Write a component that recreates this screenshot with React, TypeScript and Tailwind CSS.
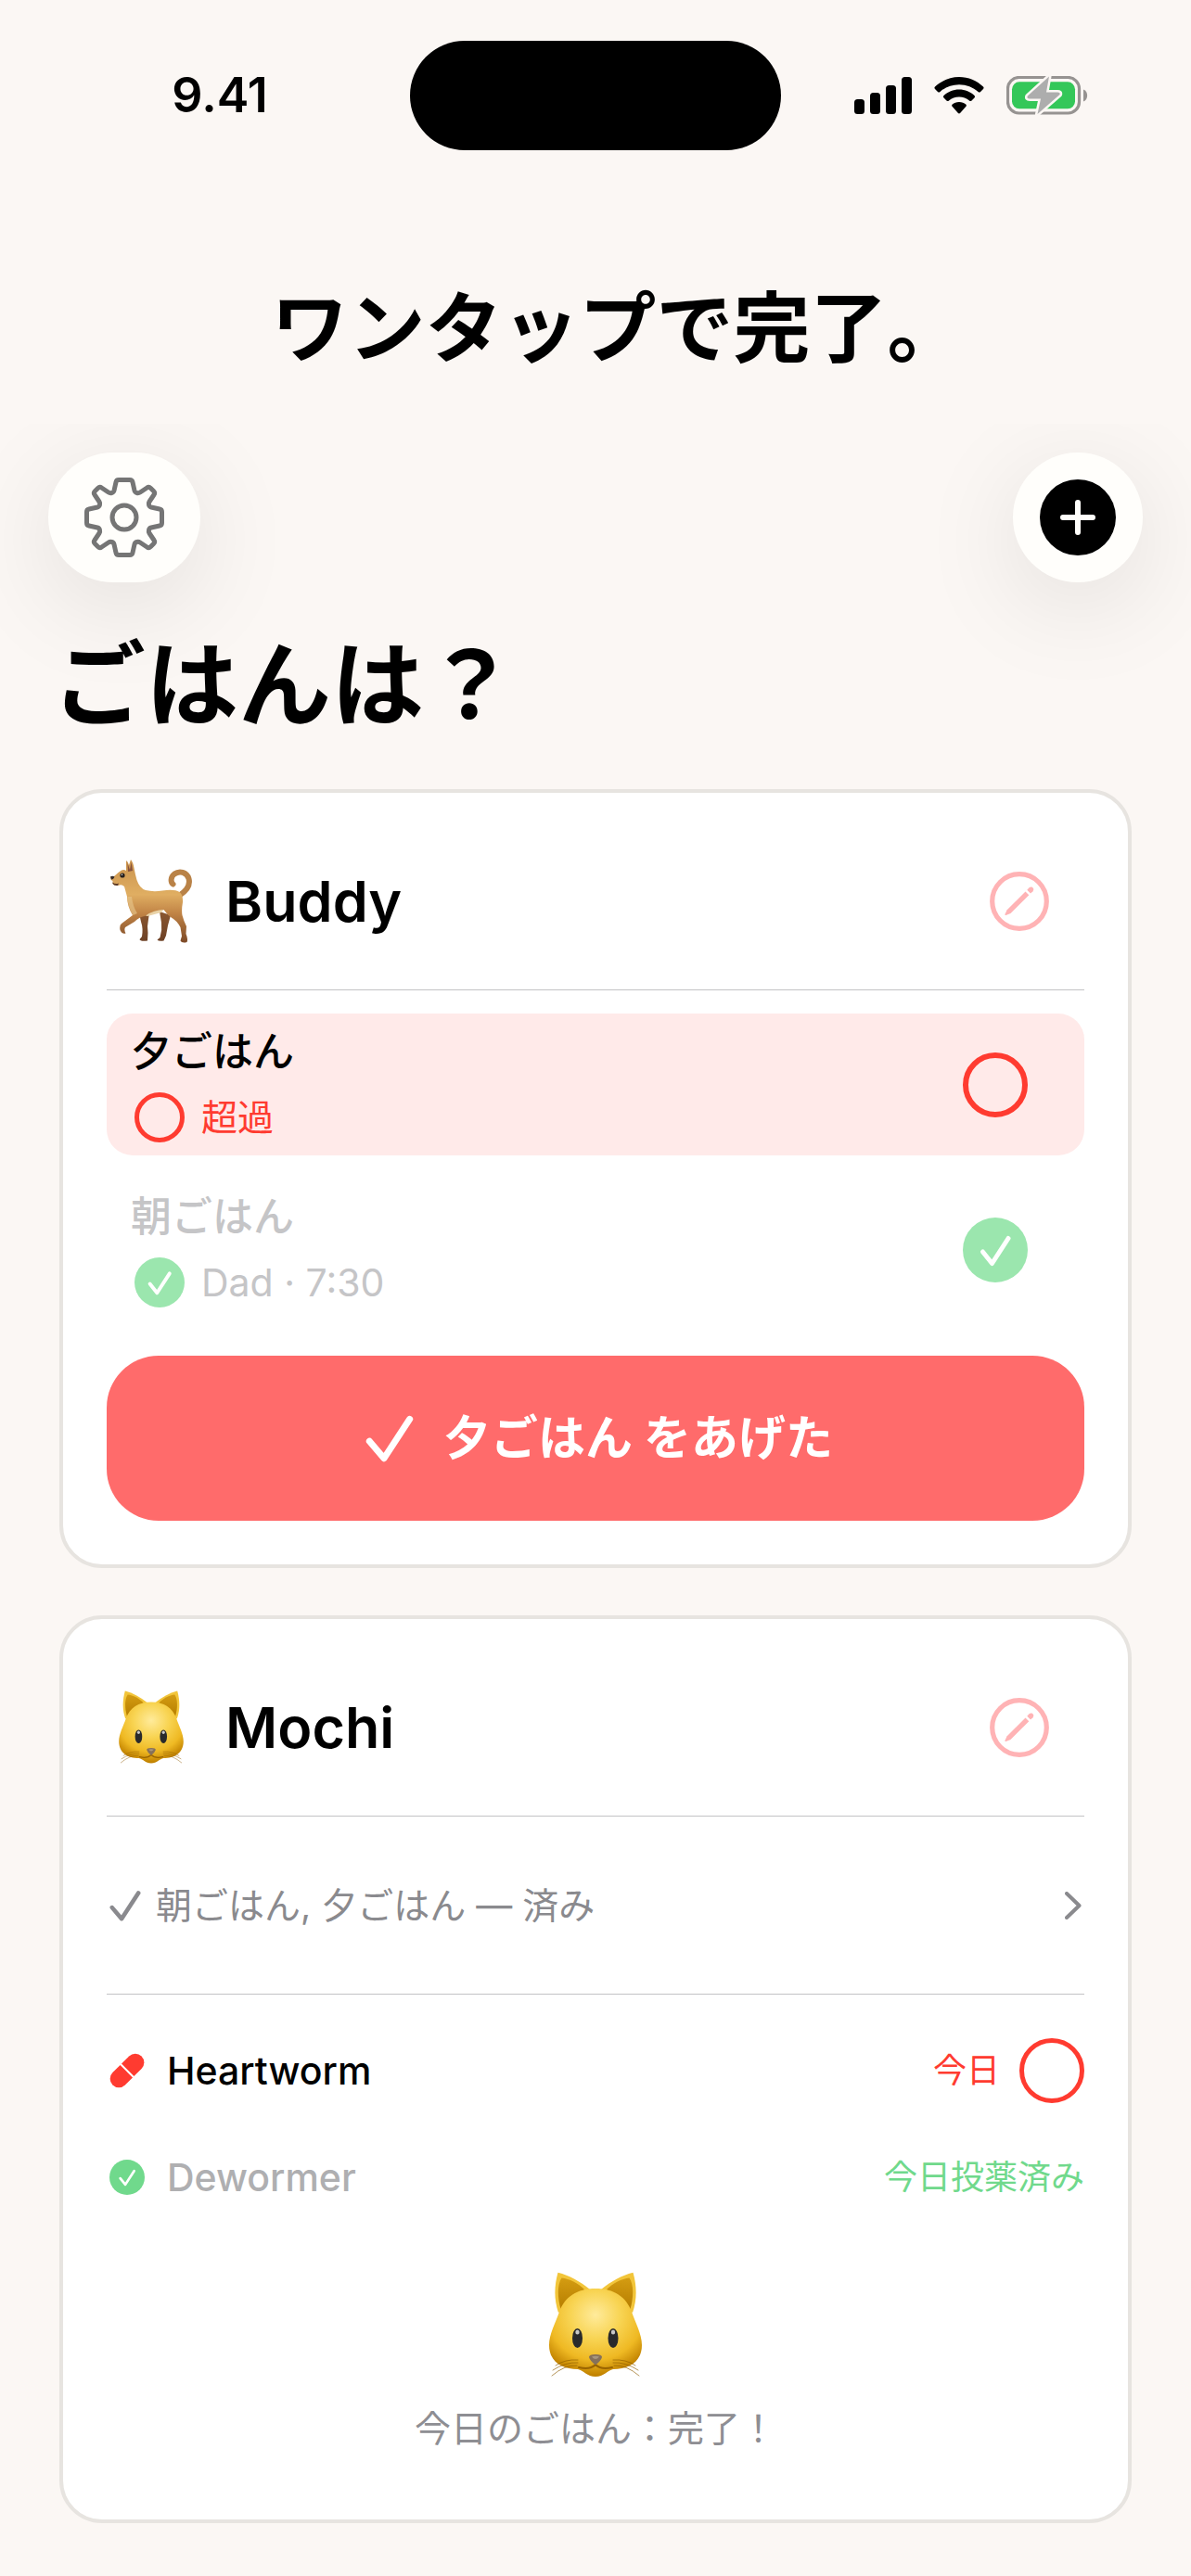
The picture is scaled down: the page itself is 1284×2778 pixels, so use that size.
import React from 'react';

interface IconProps {
  className?: string;
}

interface TickCircleProps {
  label: string;
  done?: boolean;
  thin?: boolean;
}

interface PetCardProps {
  name: string;
  avatar: React.ReactNode;
  children: React.ReactNode;
}

const CheckIcon: React.FC<IconProps> = ({ className }) => (
  <svg className={className} viewBox="0 0 48 48" fill="none" stroke="currentColor" aria-hidden="true">
    <path strokeLinecap="round" strokeLinejoin="round" strokeWidth={6.5} d="M4 27L18.500 44L44 5" />
  </svg>
);

const CheckCircle: React.FC<IconProps> = ({ className }) => (
  <svg className={className} viewBox="0 0 70 70" aria-hidden="true">
    <circle cx="35" cy="35" r="35" fill="currentColor" />
    <path d="M21.500 37L31.500 49.500L49 22.500" fill="none" stroke="#fff" strokeWidth="5" strokeLinecap="round" strokeLinejoin="round" />
  </svg>
);

const SignalIcon = () => (
  <svg className="h-10 w-[62px]" viewBox="0 0 62 40" aria-hidden="true">
    <rect x="0" y="24" width="11" height="16" rx="3.500" />
    <rect x="17" y="17" width="11" height="23" rx="3.500" />
    <rect x="34" y="9" width="11" height="31" rx="3.500" />
    <rect x="51" y="0" width="11" height="40" rx="3.500" />
  </svg>
);

const WifiIcon = () => (
  <svg className="h-10 w-[54px]" viewBox="0 0 54 40" aria-hidden="true">
    <path d="M27 0C37 0 46 4 53 10.500Q54.200 11.800 53 13L50 16Q48.800 17 47.500 16C42 11 35 8.200 27 8.200S12 11 6.500 16Q5.200 17 4 16L1 13Q-.2 11.800 1 10.500C8 4 17 0 27 0Z" />
    <path d="M27 13.500C33.500 13.500 39 16 43.500 20Q44.800 21.300 43.500 22.600L40.500 25.500Q39.300 26.600 38 25.500C35 23 31.200 21.500 27 21.500S19 23 16 25.500Q14.700 26.600 13.500 25.500L10.500 22.600Q9.200 21.300 10.500 20C15 16 20.500 13.500 27 13.500Z" />
    <path d="M27 27C30 27 32.500 28 34.200 29.400Q35.500 30.600 34.200 31.900L28.300 38.800Q27 40.200 25.700 38.800L19.800 31.900Q18.500 30.600 19.800 29.400C21.500 28 24 27 27 27Z" />
  </svg>
);

const BatteryIcon = () => (
  <svg className="h-[42px] w-[88px]" viewBox="0 0 88 42" aria-hidden="true">
    <rect x="1.500" y="1.500" width="77" height="38.500" rx="12" fill="none" stroke="#969391" strokeWidth="3.200" />
    <rect x="6" y="6.300" width="68" height="29" rx="8" fill="#34c759" />
    <path d="M83 14.500C88.500 16.500 88.500 25.500 83 27.500Z" fill="#969391" />
    <path d="M46 .5L22.800 21.500Q21.500 24.500 25 24.500H37L33.500 41L57.500 20Q58.500 17.500 55 17.500H43Z" fill="#adadad" stroke="#fbf7f4" strokeWidth="5" paintOrder="stroke" strokeLinejoin="round" />
  </svg>
);

const GearIcon: React.FC<IconProps> = ({ className }) => (
  <svg className={className} viewBox="-43 -43 86 86" fill="none" stroke="currentColor" strokeWidth="5" strokeLinejoin="round" aria-hidden="true">
    <path d="M-6 -40.500H6Q8.500 -40.500 9 -38L11 -29Q11.500 -27 13.500 -26.500Q15.500 -26 17 -27L24.500 -32Q26.500 -33.500 28.500 -31.500L31.500 -28.500Q33.500 -26.500 32 -24.500L27 -17Q26 -15.500 26.500 -13.500Q27 -11.500 29 -11L38 -9Q40.500 -8.500 40.500 -6V6Q40.500 8.500 38 9L29 11Q27 11.500 26.500 13.500Q26 15.500 27 17L32 24.500Q33.500 26.500 31.500 28.500L28.500 31.500Q26.500 33.500 24.500 32L17 27Q15.500 26 13.500 26.500Q11.500 27 11 29L9 38Q8.500 40.500 6 40.500H-6Q-8.500 40.500 -9 38L-11 29Q-11.500 27 -13.500 26.500Q-15.500 26 -17 27L-24.500 32Q-26.500 33.500 -28.500 31.500L-31.500 28.500Q-33.500 26.500 -32 24.500L-27 17Q-26 15.500 -26.500 13.500Q-27 11.500 -29 11L-38 9Q-40.500 8.500 -40.500 6V-6Q-40.500 -8.500 -38 -9L-29 -11Q-27 -11.500 -26.500 -13.500Q-26 -15.500 -27 -17L-32 -24.500Q-33.500 -26.500 -31.500 -28.500L-28.500 -31.500Q-26.500 -33.500 -24.500 -32L-17 -27Q-15.500 -26 -13.500 -26.500Q-11.500 -27 -11 -29L-9 -38Q-8.500 -40.500 -6 -40.500Z" />
    <circle r="13" />
  </svg>
);

const PencilCircle: React.FC<IconProps> = ({ className }) => (
  <svg className={className} viewBox="0 0 64 64" aria-hidden="true">
    <circle cx="32" cy="32" r="29.300" fill="none" stroke="currentColor" strokeWidth="5.200" />
    <path d="M38.500 21.500L42.300 25.300L22.500 45L17.500 47Q16 47.300 16.500 45.800L18.700 41.200Z" fill="currentColor" />
    <path d="M40.300 19.800L42.500 17.300C45.500 15 48.800 18.300 46.500 21.200L44 23.500Z" fill="currentColor" />
  </svg>
);

const PillIcon: React.FC<IconProps> = ({ className }) => (
  <svg className={className} viewBox="0 0 38 38" aria-hidden="true">
    <g transform="rotate(-45 19 19)" fill="currentColor">
      <path d="M18 9.500V28.500H6.500A9.500 9.500 0 0 1 6.500 9.500Z" />
      <path d="M20 9.500V28.500H31.500A9.500 9.500 0 0 0 31.500 9.500Z" />
    </g>
  </svg>
);

const DogEmoji: React.FC<IconProps> = ({ className }) => (
  <svg className={className} viewBox="0 0 90 90" role="img" aria-label="犬">
    <defs>
      <linearGradient id="dog-coat" x1="0" y1="0" x2="0" y2="1">
        <stop offset="0" stopColor="#c9924d" />
        <stop offset=".42" stopColor="#e0ae62" />
        <stop offset=".65" stopColor="#c08345" />
        <stop offset="1" stopColor="#7d4a28" />
      </linearGradient>
      <linearGradient id="dog-far" x1="0" y1="0" x2="0" y2="1">
        <stop offset="0" stopColor="#8a5730" />
        <stop offset="1" stopColor="#6d4126" />
      </linearGradient>
    </defs>
    <path d="M32 58L34 67Q36.500 74 35 83L32.500 86Q33 88.500 41 87.500Q42 79 41 72L43 57Z" fill="url(#dog-far)" />
    <path d="M54 56L56 68Q57 76 54.500 84L51.500 86.500Q53 88.500 58.500 87.500L61 82L63 71L66 60Z" fill="url(#dog-far)" />
    <path d="M75 39C83 34 87.500 28 85.500 20.500C83.500 13.500 75.500 11.500 70 15.500C65.500 19 66 24.500 68.500 26.500" fill="none" stroke="#b98247" strokeWidth="6" strokeLinecap="round" />
    <path d="M18 12L18 1Q20 2 21 6L23 0Q25.500 3 26.500 9Q28 17 29.500 22Q32.500 31 39 33Q47 35 57 33.500Q70 31.500 75.500 35Q79.500 38 79 46Q77.500 54 78.500 60Q80 66 83 72L82.500 80Q85 86 83.500 89Q78 90.500 76.500 87.500L78 82.500L76.500 73Q73 66 66 62Q62 59 58.500 54Q48 57 38 61Q32 62 27 67L17 73Q15.500 75.500 17.500 79.500Q14 81 11.500 76Q10.500 71 13 69L25 60Q19 50 19 40L16 29Q13 26 9.500 28Q5 28.500 3.500 26L3.500 23Q1 22 1 19Q2 17.500 5 18Q9 14 13 11.500Q16 10.500 18 12Z" fill="url(#dog-coat)" />
    <path d="M20 13L19.500 4L22 11L23.500 3L25 12Z" fill="#87513c" />
    <path d="M19.500 40Q20 52 25.500 60L30 58Q25 50 24 40Z" fill="#e8c88e" opacity=".6" />
    <path d="M39 60.500Q48 54 58.500 54L56 57L41 61Z" fill="#e9d3a8" />
    <path d="M1 18.500Q3 17 5.500 18.500Q4.500 21.500 2 21.500Z" fill="#342b2b" />
    <path d="M3.500 24.500Q6 27 10 25.500L9 28Q5 28.500 3.500 26Z" fill="#5b3a28" />
    <circle cx="14" cy="17" r="2.600" fill="#26201e" />
    <circle cx="13.500" cy="16.300" r=".7" fill="#fff" />
  </svg>
);

const CatEmoji: React.FC<IconProps & { id: string }> = ({ className, id }) => (
  <svg className={className} viewBox="0 0 100 115" role="img" aria-label="猫">
    <defs>
      <radialGradient id={`${id}-fur`} cx=".5" cy=".3" r=".68">
        <stop offset="0" stopColor="#ffeb9b" />
        <stop offset=".4" stopColor="#f8d453" />
        <stop offset=".75" stopColor="#efb923" />
        <stop offset="1" stopColor="#c28300" />
      </radialGradient>
      <linearGradient id={`${id}-ear`} x1="0" y1="0" x2="0" y2="1">
        <stop offset="0" stopColor="#d49c12" />
        <stop offset="1" stopColor="#b67e00" />
      </linearGradient>
    </defs>
    <g fill="#f2c53a">
      <path d="M9.500 .7C5.500 15 5 29 10 44L44 19C33 10 22 4 9.500 .7Z" />
      <path d="M90.500 .7C94.500 15 95 29 90 44L56 19C67 10 78 4 90.500 .7Z" />
    </g>
    <g fill={`url(#${id}-ear)`}>
      <path d="M13.500 6.500C8.500 14 9 28 12.500 40L38 19C31 12 22 7.500 13.500 6.500Z" />
      <path d="M86.500 6.500C91.500 14 91 28 87.500 40L62 19C69 12 78 7.500 86.500 6.500Z" />
    </g>
    <path d="M50 18C30 18 17 27 11 43C7 55 0 67 0 79C0 97 14 105 31 105C37 106 41 113 50 113S63 106 69 105C86 105 100 97 100 79C100 67 93 55 89 43C83 27 70 18 50 18Z" fill={`url(#${id}-fur)`} />
    <g fill="none" stroke="#8d5c00" strokeWidth="1" strokeLinecap="round">
      <path d="M31 95Q17 94 7 101M31 98Q18 97 4 106M30 101Q17 100 3 112" opacity=".65" />
      <path d="M69 95Q83 94 93 101M69 98Q82 97 96 106M70 101Q83 100 97 112" opacity=".65" />
      <path d="M32 103Q44 106 50 100Q56 106 68 103" stroke="#996400" strokeWidth="2" />
    </g>
    <ellipse cx="30.500" cy="71.500" rx="5.500" ry="10.500" fill="#292a2c" />
    <ellipse cx="69" cy="71.500" rx="5.500" ry="10.500" fill="#292a2c" />
    <ellipse cx="30.500" cy="65" rx="2.200" ry="2.500" fill="#c8c8c8" />
    <ellipse cx="69" cy="65" rx="2.200" ry="2.500" fill="#c8c8c8" />
    <path d="M43 92Q43 89 50 89T57 92Q56 96 50 100.500Q44 96 43 92Z" fill="#86715a" />
    <path d="M46 91.500Q50 90 54 91.500Q52 94 50 94T46 91.500Z" fill="#a8977f" />
  </svg>
);

// Checkbox and its tick share one grid cell
const TickCircle: React.FC<TickCircleProps> = ({ label, done = false, thin = false }) => (
  <span className="grid size-[70px] shrink-0">
    <input
      type="checkbox"
      aria-label={label}
      defaultChecked={done}
      className={`peer col-start-1 row-start-1 size-[70px] appearance-none rounded-full border-[#ff3b30] checked:border-0 ${thin ? 'border-[5px]' : 'border-[6px]'}`}
    />
    <CheckCircle className="pointer-events-none invisible col-start-1 row-start-1 size-[70px] text-[#9be6ae] peer-checked:visible" />
  </span>
);

const PetCard: React.FC<PetCardProps> = ({ name, avatar, children }) => (
  <article className="rounded-[46px] border-4 border-[#e7e4e0] bg-white p-[47px]">
    <header className="mb-[25px] flex h-[140px] items-center pr-[38px]">
      <div className="flex w-24 justify-center">{avatar}</div>
      <h2 className="ml-8 flex-1 text-[61px] leading-[80px] font-semibold">{name}</h2>
      <button type="button" aria-label={`${name}を編集`} className="text-[#ffb3b5]">
        <PencilCircle className="size-16" />
      </button>
    </header>
    <hr className="border-[#c3c3c5]" />
    {children}
  </article>
);

const App: React.FC = () => {
  return (
    <div className="min-h-screen bg-[#fbf7f4] pb-14 font-['Inter','Noto_Sans_CJK_JP',sans-serif] text-black">
      <div className="grid grid-cols-[1fr_400px_1fr] items-center pt-11">
        <div className="pl-8 text-center text-[52px] leading-[60px] font-semibold">9.41</div>
        <div className="h-[118px] rounded-full bg-black" />
        <div className="flex items-center justify-center gap-6 pr-8">
          <SignalIcon />
          <WifiIcon />
          <BatteryIcon />
        </div>
      </div>

      <p className="pt-[150px] pb-[61px] pl-12 text-center text-[83px] leading-[84px] font-bold">ワンタップで完了。</p>

      <main className="overflow-hidden">
        <div className="flex items-center justify-between px-[52px] pt-[31px]">
          <button type="button" aria-label="設定" className="flex h-[140px] w-[164px] items-center justify-center rounded-full bg-[#fffefb] text-[#757575] shadow-[0_24px_110px_rgba(0,0,0,0.10)]">
            <GearIcon className="size-[86px]" />
          </button>
          <button type="button" aria-label="ペットを追加" className="flex size-[140px] items-center justify-center rounded-full bg-[#fffefb] shadow-[0_24px_110px_rgba(0,0,0,0.10)]">
            <svg className="size-[82px]" viewBox="0 0 82 82" aria-hidden="true">
              <circle cx="41" cy="41" r="41" />
              <path d="M41 25V57M25 41H57" stroke="#fffefb" strokeWidth="6" strokeLinecap="round" />
            </svg>
          </button>
        </div>

        <h1 className="mt-[60px] px-[57px] text-[100px] leading-[102px] font-bold">ごはんは？</h1>

        <div className="mt-[61px] flex flex-col gap-[51px] px-16">
          <PetCard name="Buddy" avatar={<DogEmoji className="size-[90px]" />}>
            <ul className="mt-[25px] flex flex-col gap-[25px]">
              <li className="flex items-center justify-between rounded-[28px] bg-[#ffeae9] py-3.5 pr-[61px] pl-[26px]">
                <div className="flex flex-col gap-[17px]">
                  <span className="text-[44px] leading-[54px] font-medium">夕ごはん</span>
                  <span className="flex items-center gap-[18px] pl-1 text-[39px] leading-[54px] text-[#ff3b30]">
                    <span className="size-[54px] rounded-full border-[5px] border-[#ff3b30]" />
                    超過
                  </span>
                </div>
                <TickCircle label="夕ごはん" />
              </li>
              <li className="flex items-center justify-between py-3.5 pr-[61px] pl-[26px] text-[#c5c5c7]">
                <div className="flex flex-col gap-[17px]">
                  <span className="text-[44px] leading-[54px] font-medium">朝ごはん</span>
                  <span className="flex items-center gap-[18px] pl-1 text-[41px] leading-[54px]">
                    <CheckCircle className="size-[54px] text-[#9be6ae]" />
                    Dad · 7:30
                  </span>
                </div>
                <TickCircle label="朝ごはん" done />
              </li>
            </ul>
            <button type="button" className="mt-[38px] flex h-[178px] w-full items-center justify-center gap-8 rounded-[56px] bg-[#ff6b6b] pl-2 text-[51px] leading-[60px] font-bold text-white">
              <CheckIcon className="size-[52px]" />
              夕ごはん をあげた
            </button>
          </PetCard>

          <PetCard name="Mochi" avatar={<CatEmoji id="mochi" className="h-20 w-[70px]" />}>
            <button type="button" className="flex h-[191px] w-full items-center gap-4 px-[3px] text-left text-[39px] leading-[54px] text-[#8a8a8e]">
              <CheckIcon className="size-[34px]" />
              <span className="flex-1">朝ごはん, 夕ごはん — 済み</span>
              <svg className="h-[30px] w-[18px]" viewBox="0 0 18 30" fill="none" stroke="currentColor" aria-hidden="true">
                <path strokeLinecap="round" strokeLinejoin="round" strokeWidth="4" d="M2 2L15.500 15L2 28" />
              </svg>
            </button>
            <hr className="border-[#c3c3c5]" />
            <ul className="mt-[47px] flex flex-col gap-[53px]">
              <li className="flex items-center">
                <PillIcon className="ml-[3px] size-[38px] text-[#ff3b30]" />
                <span className="ml-6 flex-1 text-[41px] leading-[54px] font-medium">Heartworm</span>
                <span className="mr-[21px] text-[36px] leading-[54px] text-[#ff3b30]">今日</span>
                <TickCircle label="Heartworm" thin />
              </li>
              <li className="flex items-center">
                <CheckCircle className="ml-[3px] size-[38px] text-[#70d98c]" />
                <span className="ml-6 flex-1 text-[41px] leading-[54px] font-medium text-[#afafb1]">Dewormer</span>
                <span className="text-[36px] leading-[54px] text-[#70d98c]">今日投薬済み</span>
              </li>
            </ul>
            <div className="mt-[75px] flex flex-col items-center">
              <CatEmoji id="all-done" className="h-[115px] w-[100px]" />
              <p className="mt-[27px] mb-6 text-[39px] leading-[54px] text-[#8e8e93]">今日のごはん：完了！</p>
            </div>
          </PetCard>
        </div>
      </main>
    </div>
  );
};

export default App;
